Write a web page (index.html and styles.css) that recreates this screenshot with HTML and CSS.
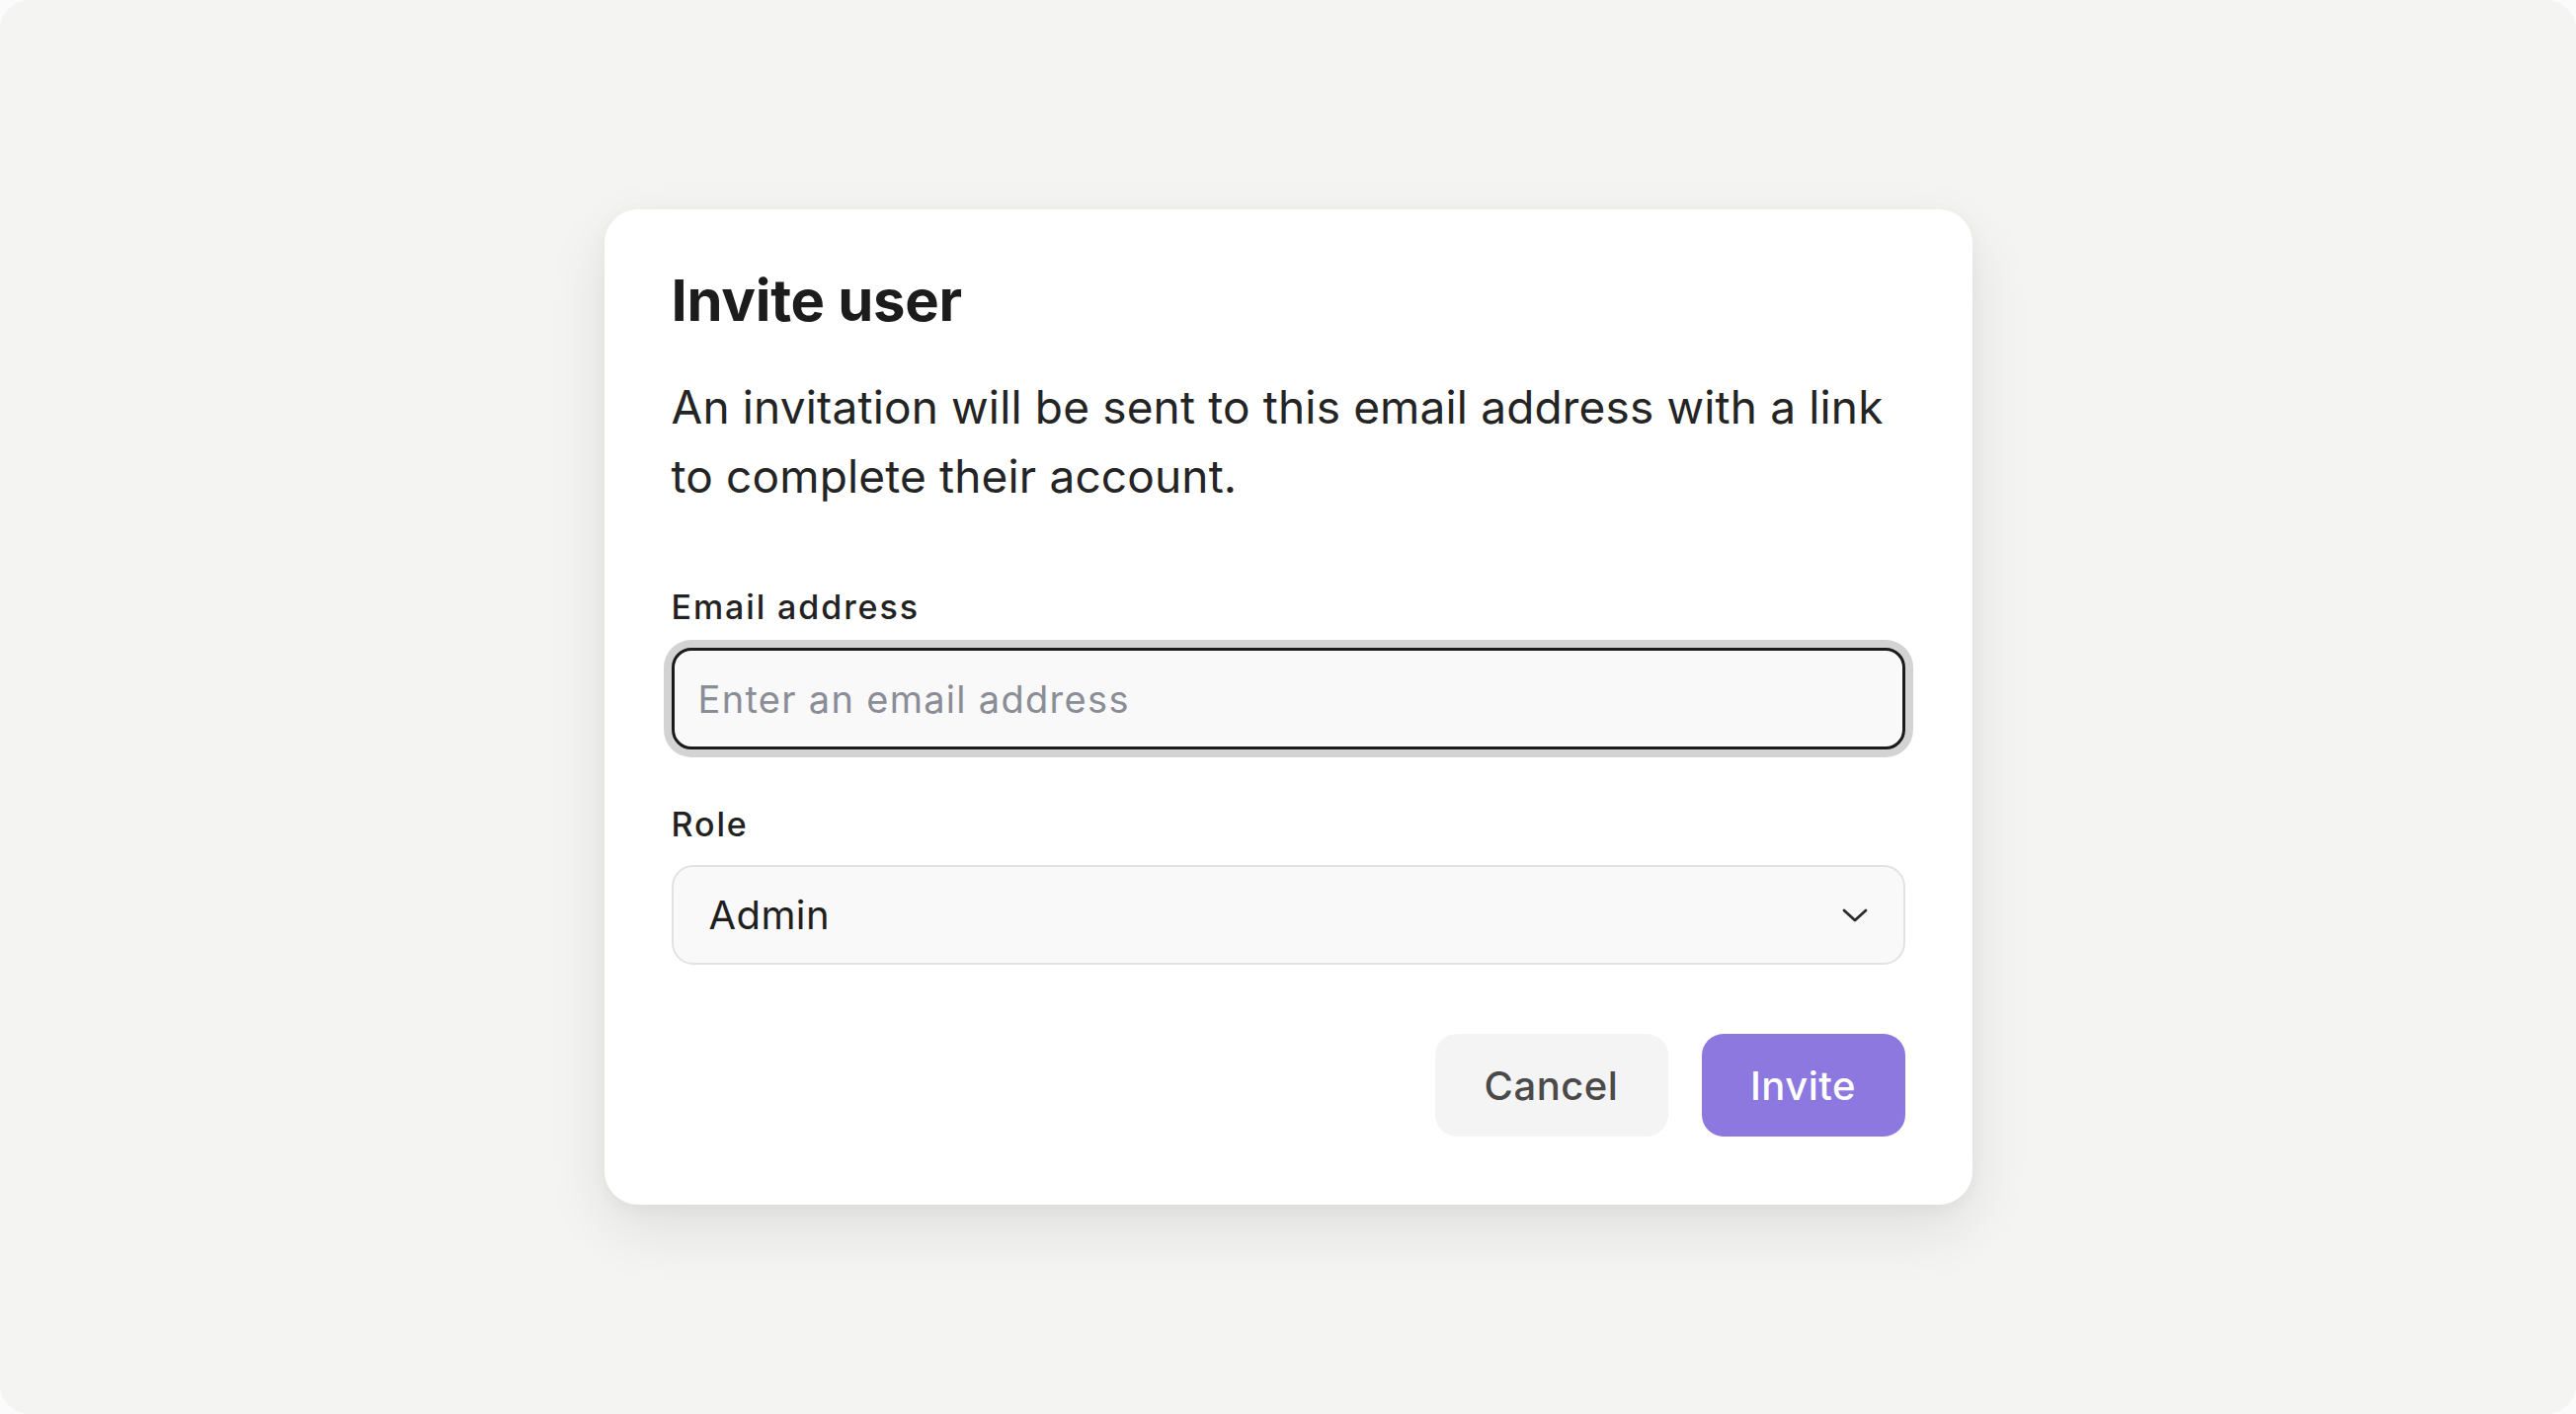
FILE: index.html
```html
<!DOCTYPE html>
<html lang="en">
<head>
<meta charset="utf-8">
<title>Invite user</title>
<link rel="stylesheet" href="styles.css">
</head>
<body>
<div class="screen">
  <div class="dialog" role="dialog" aria-labelledby="dlg-title">
    <h1 class="dialog-title" id="dlg-title">Invite user</h1>
    <p class="dialog-text">An invitation will be sent to this email address with a link to complete their account.</p>
    <label class="field-label" for="email">Email address</label>
    <input class="text-input" id="email" type="email" placeholder="Enter an email address">
    <div class="field-label role-label">Role</div>
    <div class="select">
      <span class="select-value">Admin</span>
      <svg class="chevron" viewBox="0 0 26 14" width="26" height="14" aria-hidden="true">
        <path d="M2 2 L13 12 L24 2" fill="none" stroke="#2b2b2b" stroke-width="2.8" stroke-linecap="round" stroke-linejoin="round"/>
      </svg>
    </div>
    <div class="actions">
      <button class="btn btn-cancel" type="button">Cancel</button>
      <button class="btn btn-invite" type="button">Invite</button>
    </div>
  </div>
</div>
</body>
</html>
```

FILE: styles.css
```css
* { box-sizing: border-box; }

html, body {
  margin: 0;
  padding: 0;
  height: 100%;
}

body {
  background: #fbfbfb;
  font-family: Inter, "Noto Sans", "Liberation Sans", sans-serif;
}

.screen {
  width: 100%;
  height: 100vh;
  background: #f4f4f2;
  border-radius: 30px;
  display: flex;
  align-items: center;
  justify-content: center;
}

.dialog {
  width: 1385px;
  height: 1008px;
  background: #ffffff;
  border-radius: 34px;
  padding: 57px 68px 69px;
  display: flex;
  flex-direction: column;
  box-shadow: 0 24px 64px rgba(0, 0, 0, 0.09), 0 4px 18px rgba(0, 0, 0, 0.04);
}

.dialog-title {
  margin: 0;
  font-size: 58px;
  line-height: 70px;
  font-weight: 700;
  color: #1c1c1c;
  letter-spacing: -0.3px;
}

.dialog-text {
  margin: 38px 0 0;
  font-size: 46px;
  line-height: 70px;
  font-weight: 400;
  letter-spacing: 0.15px;
  color: #242424;
}

.field-label {
  display: block;
  margin-top: 78px;
  font-size: 34px;
  line-height: 40px;
  font-weight: 500;
  letter-spacing: 1.9px;
  color: #222222;
}

.role-label {
  margin-top: 56px;
}

.text-input {
  margin-top: 21px;
  height: 103px;
  width: 100%;
  border: 3px solid #1b1b1b;
  border-radius: 20px;
  background: #f9f9f9;
  box-shadow: 0 0 0 8px #d3d3d3;
  padding: 0 24px;
  font-family: inherit;
  font-size: 38px;
  letter-spacing: 1.3px;
  color: #1f1f1f;
  outline: none;
}

.text-input::placeholder {
  color: #8a8d96;
}

.select {
  margin-top: 21px;
  height: 101px;
  border: 2px solid #e2e2e2;
  border-radius: 22px;
  background: #f9f9f9;
  display: flex;
  align-items: center;
  justify-content: space-between;
  padding: 0 36px 0 36px;
}

.select-value {
  font-size: 40px;
  letter-spacing: 0.4px;
  color: #1f1f1f;
}

.chevron {
  display: block;
}

.actions {
  margin-top: auto;
  display: flex;
  justify-content: flex-end;
  gap: 34px;
}

.btn {
  height: 104px;
  border: none;
  border-radius: 22px;
  font-family: inherit;
  font-size: 40px;
  font-weight: 450;
  letter-spacing: 0.5px;
  cursor: pointer;
}

.btn-cancel {
  width: 236px;
  background: #f4f4f4;
  color: #4a4a4a;
}

.btn-invite {
  width: 206px;
  background: #8d78e0;
  color: #ffffff;
}
```
